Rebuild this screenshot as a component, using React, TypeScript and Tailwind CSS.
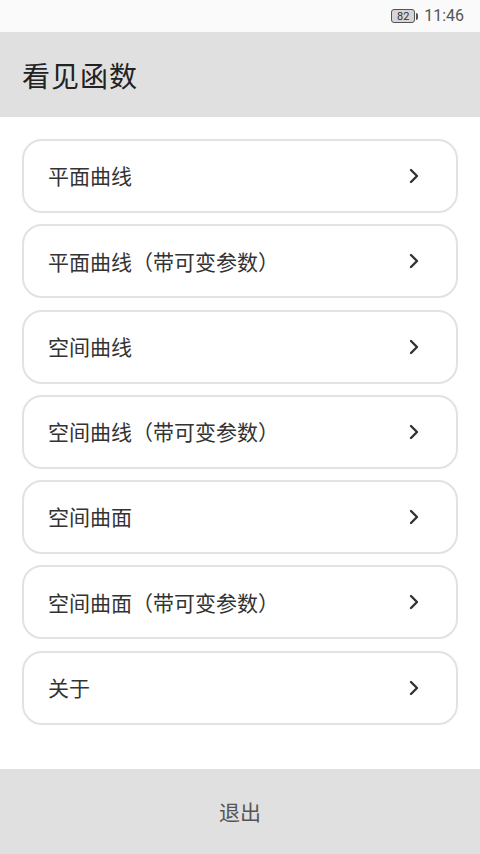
import React from 'react';

const items = [
  '平面曲线',
  '平面曲线（带可变参数）',
  '空间曲线',
  '空间曲线（带可变参数）',
  '空间曲面',
  '空间曲面（带可变参数）',
  '关于',
];

const font = { fontFamily: '"Noto Sans CJK SC", "Noto Sans", sans-serif' };

const Chevron: React.FC = () => (
  <svg width="10" height="16" viewBox="0 0 10 16" fill="none">
    <path d="M2 2 L8 8 L2 14" stroke="#333" strokeWidth="2.4" strokeLinecap="round" strokeLinejoin="round" />
  </svg>
);

const App: React.FC = () => {
  return (
    <div className="w-[480px] h-[854px] bg-white flex flex-col overflow-hidden" style={font}>
      {/* status bar */}
      <div className="h-8 flex items-center justify-end pr-4 gap-[6px] bg-[#fafafa]">
        <div className="flex items-center gap-[1px]">
          <div className="w-[24px] h-[14px] rounded-[3px] border border-[#555] bg-[#d6d6d6] flex items-center justify-center text-[11px] leading-none text-[#333] font-['Roboto',sans-serif]">
            82
          </div>
          <div className="w-[2px] h-[7px] bg-[#555] rounded-r-sm" />
        </div>
        <span className="text-[16px] text-[#555] font-['Roboto',sans-serif]">11:46</span>
      </div>

      {/* header */}
      <div className="h-[85px] bg-[#e0e0e0] flex items-center pl-[22px]">
        <h1 className="text-[28px] text-[#222] tracking-[1px]">看见函数</h1>
      </div>

      {/* list */}
      <div className="flex-1 flex flex-col gap-[11.3px] px-[22px] pt-[22px]">
        {items.map((label) => (
          <div
            key={label}
            className="h-[74px] shrink-0 rounded-[20px] border-2 border-[#e2e2e2] bg-white flex items-center justify-between pl-[24px] pr-[37px]"
          >
            <span className="text-[21px] text-[#333]">{label}</span>
            <Chevron />
          </div>
        ))}
      </div>

      {/* bottom */}
      <div className="h-[85px] bg-[#e0e0e0] flex items-center justify-center">
        <span className="text-[21px] text-[#555]">退出</span>
      </div>
    </div>
  );
};

export default App;
